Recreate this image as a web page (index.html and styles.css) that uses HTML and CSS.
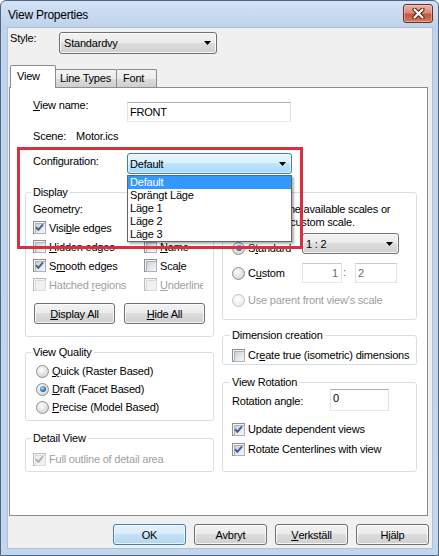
FILE: index.html
```html
<!DOCTYPE html>
<html>
<head>
<meta charset="utf-8">
<title>View Properties</title>
<link rel="stylesheet" href="styles.css">
</head>
<body>
<div class="window">
  <div class="titlebar">
    <span class="title">View Properties</span>
    <div class="close-btn">
      <svg width="13" height="11" viewBox="0 0 13 11"><path d="M2.5 1.5 L10.5 9.5 M10.5 1.5 L2.5 9.5" stroke="#4a1a12" stroke-width="4" stroke-linecap="round"/><path d="M2.5 1.5 L10.5 9.5 M10.5 1.5 L2.5 9.5" stroke="#fff" stroke-width="2.2" stroke-linecap="round"/></svg>
    </div>
  </div>
  <div class="client">
    <div class="style-row">
      <span class="style-label">Style:</span>
      <div class="combo combo-btn style-combo"><span>Standardvy</span><svg class="arrow" width="7" height="4" viewBox="0 0 7 4"><path d="M0 0H7L3.5 4Z" fill="#000"/></svg></div>
    </div>
    <div class="tabs">
      <div class="tab tab-sel tab-view">View</div>
      <div class="tab tab-lines">Line Types</div>
      <div class="tab tab-font">Font</div>
    </div>
    <div class="panel">
      <div class="row row-name">
        <span class="field-label"><u>V</u>iew name:</span>
        <div class="textbox name-box">FRONT</div>
      </div>
      <div class="row row-scene">
        <span class="scene-label">Scene:</span><span>Motor.ics</span>
      </div>
      <div class="row row-config">
        <span class="field-label config-label">Configuration:</span>
        <div class="combo combo-focus config-combo"><span>Default</span><svg class="arrow" width="7" height="4" viewBox="0 0 7 4"><path d="M0 0H7L3.5 4Z" fill="#000"/></svg></div>
      </div>

      <div class="columns">
        <div class="col">
          <fieldset class="group g-display">
            <legend>Display</legend>
            <div class="geom">Geometry:</div>
            <div class="cb-grid">
              <label class="check"><span class="cb"><svg class="tick" width="11" height="11" viewBox="0 0 11 11"><path d="M2 5.2 L4.4 7.8 L9 2.4" fill="none" stroke="#4a5f97" stroke-width="2"/></svg></span><span class="lbl">Visi<u>b</u>le edges</span></label>
              <span class="cell-empty"></span>
              <label class="check"><span class="cb"></span><span class="lbl"><u>H</u>idden edges</span></label>
              <label class="check col2"><span class="cb"></span><span class="lbl"><u>N</u>ame</span></label>
              <label class="check"><span class="cb"><svg class="tick" width="11" height="11" viewBox="0 0 11 11"><path d="M2 5.2 L4.4 7.8 L9 2.4" fill="none" stroke="#4a5f97" stroke-width="2"/></svg></span><span class="lbl">S<u>m</u>ooth edges</span></label>
              <label class="check col2"><span class="cb"></span><span class="lbl">Sca<u>l</u>e</span></label>
              <label class="check disabled"><span class="cb"></span><span class="lbl">Hatched <u>r</u>egions</span></label>
              <label class="check col2 disabled"><span class="cb"></span><span class="lbl"><u>U</u>nderline</span></label>
            </div>
            <div class="btn-row">
              <div class="btn btn-sm"><u>D</u>isplay All</div>
              <div class="btn btn-sm"><u>H</u>ide All</div>
            </div>
          </fieldset>

          <fieldset class="group g-quality">
            <legend>View Quality</legend>
            <label class="radio"><span class="rb"></span><span><u>Q</u>uick (Raster Based)</span></label>
            <label class="radio"><span class="rb on"></span><span><u>D</u>raft (Facet Based)</span></label>
            <label class="radio"><span class="rb"></span><span><u>P</u>recise (Model Based)</span></label>
          </fieldset>

          <fieldset class="group g-detail">
            <legend>Detail View</legend>
            <label class="check disabled"><span class="cb"><svg class="tick" width="11" height="11" viewBox="0 0 11 11"><path d="M2 5.2 L4.4 7.8 L9 2.4" fill="none" stroke="#b1b1b1" stroke-width="2"/></svg></span><span class="lbl">Full outline of detail area</span></label>
          </fieldset>
        </div>

        <div class="col">
          <fieldset class="group g-scale">
            <legend>Scale</legend>
            <div class="scale-text">Use one of the available scales or<br>enter a new custom scale.</div>
            <div class="std-row">
              <label class="radio r-label std-radio"><span class="rb on"></span><span>S<u>t</u>andard</span></label>
              <div class="combo combo-btn scale-combo"><span>1 : 2</span><svg class="arrow" width="7" height="4" viewBox="0 0 7 4"><path d="M0 0H7L3.5 4Z" fill="#000"/></svg></div>
            </div>
            <div class="custom-row">
              <label class="radio r-label cus-radio"><span class="rb"></span><span>C<u>u</u>stom</span></label>
              <div class="textbox disabled-box num1">1</div>
              <span class="colon">:</span>
              <div class="textbox disabled-box num2">2</div>
            </div>
            <label class="radio disabled parent-row"><span class="rb"></span><span>Use parent front view's scale</span></label>
          </fieldset>

          <fieldset class="group g-dim">
            <legend>Dimension creation</legend>
            <label class="check"><span class="cb"></span><span class="lbl">Cr<u>e</u>ate true (isometric) dimensions</span></label>
          </fieldset>

          <fieldset class="group g-rot">
            <legend>View Rotation</legend>
            <div class="angle-row">
              <span class="angle-label">Rotation angle:</span>
              <div class="textbox angle-box">0</div>
            </div>
            <label class="check update-row"><span class="cb"><svg class="tick" width="11" height="11" viewBox="0 0 11 11"><path d="M2 5.2 L4.4 7.8 L9 2.4" fill="none" stroke="#4a5f97" stroke-width="2"/></svg></span><span class="lbl">Update dependent views</span></label>
            <label class="check rotate-row"><span class="cb"><svg class="tick" width="11" height="11" viewBox="0 0 11 11"><path d="M2 5.2 L4.4 7.8 L9 2.4" fill="none" stroke="#4a5f97" stroke-width="2"/></svg></span><span class="lbl">Rotate Centerlines with view</span></label>
          </fieldset>
        </div>
      </div>

      <div class="highlight-box"></div>
      <ul class="dropdown">
        <li class="selected">Default</li>
        <li>Sprängt Läge</li>
        <li>Läge 1</li>
        <li>Läge 2</li>
        <li>Läge 3</li>
      </ul>
    </div>

    <div class="dialog-buttons">
      <div class="btn btn-dlg btn-default">OK</div>
      <div class="btn btn-dlg">Avbryt</div>
      <div class="btn btn-dlg"><u>V</u>erkställ</div>
      <div class="btn btn-dlg">Hjälp</div>
    </div>
  </div>
</div>
</body>
</html>
```

FILE: styles.css
```css
* { box-sizing: border-box; }

body {
  margin: 0;
  font-family: "Liberation Sans", Arial, sans-serif;
  font-size: 11px;
  letter-spacing: -0.2px;
  color: #000;
  background: #fff;
}

u { text-decoration: underline; text-underline-offset: 1px; }

/* ---------- window frame ---------- */
.window {
  width: 439px;
  height: 556px;
  border: 1px solid #4f6682;
  border-radius: 6px 6px 0 0;
  background: linear-gradient(#d3e2f4 0px, #bfd3ec 26px, #c2d6ed 100%);
  padding: 0 5px 6px 6px;
  display: flex;
  flex-direction: column;
  overflow: hidden;
}

.titlebar {
  height: 26px;
  display: flex;
  align-items: flex-start;
  justify-content: space-between;
}

.title {
  font-size: 12px;
  letter-spacing: -0.25px;
  line-height: 14px;
  margin-top: 7px;
  padding-left: 1px;
}

.close-btn {
  width: 30px;
  height: 19px;
  margin-top: 3px;
  border: 1px solid #6b2c22;
  border-radius: 3px;
  background: linear-gradient(#eab0a2 0%, #dc8b77 45%, #c8533a 55%, #d47a62 100%);
  box-shadow: inset 0 0 0 1px rgba(255, 255, 255, 0.35);
  display: flex;
  align-items: center;
  justify-content: center;
}

.client {
  flex: 1;
  border: 1px solid #aec1d7;
  background: #f0f0f0;
  display: flex;
  flex-direction: column;
}

/* ---------- style row ---------- */
.style-row {
  margin-top: 4px;
  height: 22px;
  padding-left: 2px;
  display: flex;
  align-items: flex-start;
}

.style-label {
  width: 49px;
  line-height: 13px;
}

.combo {
  display: flex;
  align-items: center;
  justify-content: space-between;
  border-radius: 3px;
  padding: 0 5px 0 4px;
}

.combo-btn {
  border: 1px solid #707070;
  background: linear-gradient(#f2f2f2 0%, #ebebeb 50%, #dddddd 50%, #cfcfcf 100%);
  box-shadow: inset 0 0 0 1px rgba(255, 255, 255, 0.8);
}

.combo-focus {
  border: 1px solid #3c7fb1;
  background: linear-gradient(#eaf6fd 0%, #d9f0fc 50%, #bee6fd 50%, #a7d9f5 100%);
  box-shadow: inset 0 0 0 1px rgba(255, 255, 255, 0.6);
  padding-left: 2px;
}

.style-combo { width: 158px; height: 22px; }

.arrow { flex: none; }

/* ---------- tabs ---------- */
.tabs {
  margin-top: 11px;
  height: 22px;
  padding-left: 2px;
  display: flex;
  align-items: flex-end;
}

.tab {
  height: 18px;
  border: 1px solid #898c95;
  border-bottom: none;
  border-radius: 2px 2px 0 0;
  background: linear-gradient(#f3f3f3 0%, #ebebeb 50%, #dddddd 50%, #cfcfcf 100%);
  line-height: 16px;
  white-space: nowrap;
}

.tab-sel {
  height: 23px;
  margin-bottom: -1px;
  background: #fff;
  line-height: 21px;
  position: relative;
  z-index: 1;
}

.tab-view { width: 46px; padding-left: 6px; }
.tab-lines { width: 62px; padding-left: 4px; margin-left: -1px; }
.tab-font { width: 41px; padding-left: 6px; margin-left: -1px; }

/* ---------- panel ---------- */
.panel {
  margin-left: 1px;
  width: 419px;
  height: 429px;
  border: 1px solid #898c95;
  background: #fff;
  position: relative;
  padding: 0 10px 0 15px;
}

.row {
  display: flex;
  align-items: flex-start;
  padding-left: 8px;
}

.field-label {
  width: 94px;
  line-height: 13px;
  flex: none;
}

.row-name { margin-top: 11px; }
.row-scene { margin-top: 8px; line-height: 13px; }
.row-config { margin-top: 10px; }

.scene-label { width: 43px; }
.config-label { margin-top: 2px; }

.textbox {
  border: 1px solid;
  border-color: #abadb3 #dbdfe6 #e3e9ef #e2e3ea;
  background: #fff;
  line-height: 13px;
}

.name-box {
  margin-top: 3px;
  width: 164px;
  height: 20px;
  padding: 3px 0 0 2px;
}

.config-combo { width: 165px; height: 21px; }

.columns {
  margin-top: 11px;
  display: grid;
  grid-template-columns: 189px 195px;
  column-gap: 8px;
  align-items: start;
}

.col { display: flex; flex-direction: column; }

/* ---------- group boxes ---------- */
.group {
  margin: 0;
  min-width: 0;
  border: 1px solid #d5dfe5;
  border-radius: 3px;
}

.group legend {
  padding: 0 2px;
  margin-left: -2px;
  line-height: 14px;
}

.g-display { padding: 1px 8px 12px 7px; }
.geom { line-height: 18px; }

.cb-grid {
  display: grid;
  grid-template-columns: 111px 59px;
  grid-auto-rows: 19px;
}

.check {
  display: flex;
  align-items: center;
  gap: 3px;
  height: 19px;
  white-space: nowrap;
}

.check.col2 { overflow: hidden; }

.cb {
  width: 13px;
  height: 13px;
  flex: none;
  border: 1px solid #8e8f8f;
  background: #f4f4f4;
  padding: 1px;
  position: relative;
}

.cb::before {
  content: "";
  display: block;
  width: 9px;
  height: 9px;
  border: 1px solid #aeb3b9;
  background: linear-gradient(135deg, #cbcfd5 0%, #e8eaec 60%, #f7f7f7 100%);
}

.tick {
  position: absolute;
  left: 0;
  top: 0;
}

.disabled { color: #a0a0a0; }
.disabled .cb { border-color: #bcbcbc; background: #f4f4f4; }
.disabled .cb::before { border-color: #dcdcdc; background: #f1f1f1; }

.btn-row {
  margin-top: 9px;
  padding-left: 1px;
  display: flex;
  gap: 9px;
}

.btn {
  border: 1px solid #707070;
  border-radius: 3px;
  background: linear-gradient(#f2f2f2 0%, #ebebeb 50%, #dddddd 50%, #cfcfcf 100%);
  box-shadow: inset 0 0 0 1px rgba(255, 255, 255, 0.8);
  display: flex;
  align-items: center;
  justify-content: center;
  white-space: nowrap;
}

.btn-sm { width: 81px; height: 21px; }

.g-quality { margin-top: 8px; padding: 3px 8px 4px 10px; }
.g-quality legend { margin-left: -5px; }

.radio {
  display: flex;
  align-items: center;
  gap: 3px;
  height: 18px;
  white-space: nowrap;
}

.rb {
  width: 13px;
  height: 13px;
  flex: none;
  border-radius: 50%;
  border: 1px solid #8e8f8f;
  background: radial-gradient(circle at 40% 35%, #ffffff 0%, #e6e6e6 45%, #c9c9c9 100%);
  display: flex;
  align-items: center;
  justify-content: center;
}

.rb.on::after {
  content: "";
  width: 6px;
  height: 6px;
  border-radius: 50%;
  background: radial-gradient(circle at 40% 35%, #b5e3fb 0%, #3d8ccb 45%, #14487a 100%);
}

.disabled .rb {
  border-color: #c4c4c4;
  background: radial-gradient(circle at 40% 35%, #ffffff 0%, #efefef 60%, #e2e2e2 100%);
}

.g-detail { margin-top: 10px; padding: 5px 8px 3px 7px; }
.g-detail .check { height: 18px; }

/* right column */
.g-scale { padding: 4px 8px 10px 9px; }

.scale-text { line-height: 13px; white-space: nowrap; }

.std-row {
  margin-top: 4px;
  height: 21px;
  display: flex;
  align-items: flex-start;
}

.r-label { width: 70px; flex: none; }
.std-radio { margin-top: 6px; }

.scale-combo { width: 97px; height: 21px; padding-left: 3px; }

.custom-row {
  margin-top: 9px;
  height: 20px;
  display: flex;
  align-items: flex-start;
}

.cus-radio { margin-top: 1px; }

.disabled-box {
  border-color: #c9ccd1 #dfe2e6 #e6e9ec #dfe2e6;
  color: #6d6d6d;
  height: 20px;
  padding-top: 3px;
}

.num1 { width: 40px; text-align: right; padding-right: 3px; }
.colon { width: 13px; padding-left: 1px; line-height: 19px; color: #6d6d6d; }
.num2 { width: 42px; padding-left: 2px; }

.parent-row { margin-top: 8px; }

.g-dim { margin-top: 8px; padding: 4px 8px 0 9px; }
.g-dim .check { height: 18px; }

.g-rot { margin-top: 10px; padding: 0 8px 13px 9px; }

.angle-row { display: flex; align-items: flex-start; height: 22px; }
.angle-label { width: 98px; margin-top: 6px; line-height: 13px; }
.angle-box { width: 59px; height: 22px; padding: 2px 0 0 2px; }

.update-row { margin-top: 9px; height: 18px; }
.rotate-row { margin-top: 2px; height: 18px; }

/* ---------- overlays ---------- */
.highlight-box {
  position: absolute;
  left: 7px;
  top: 59px;
  width: 286px;
  height: 102px;
  border: 3px solid #d7303e;
  z-index: 2;
}

.dropdown {
  position: absolute;
  left: 117px;
  top: 87px;
  width: 165px;
  margin: 0;
  padding: 0;
  list-style: none;
  border: 1px solid #646464;
  background: #fff;
  box-shadow: 2px 2px 2px rgba(0, 0, 0, 0.3);
  z-index: 3;
}

.dropdown li {
  height: 13px;
  line-height: 13px;
  padding-left: 2px;
}

.dropdown li.selected {
  background: #3399ff;
  color: #fff;
}

/* ---------- dialog buttons ---------- */
.dialog-buttons {
  margin-top: 8px;
  padding-right: 3px;
  display: flex;
  justify-content: flex-end;
  gap: 8px;
}

.btn-dlg { width: 73px; height: 21px; }

.btn-default {
  border-color: #3c7fb1;
  background: linear-gradient(#e5f1fb 0%, #d9ebf9 50%, #c4e0f7 50%, #b5d6f1 100%);
  box-shadow: inset 0 0 0 1px rgba(255, 255, 255, 0.7);
}
```
